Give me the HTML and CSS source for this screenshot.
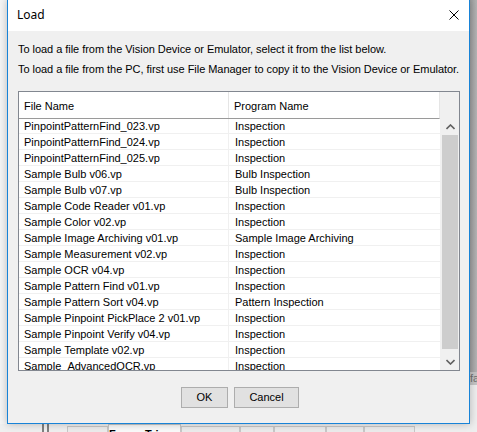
FILE: index.html
```html
<!DOCTYPE html>
<html>
<head>
<meta charset="utf-8">
<title>Load</title>
<link rel="stylesheet" href="styles.css">
</head>
<body>
<div class="app">
  <div class="app-main">
    <div class="app-canvas"></div>
    <div class="tabbar">
      <div class="rails"><span class="rail"></span><span class="rail"></span></div>
      <div class="tabs">
        <div class="tab t-current">Current</div>
        <div class="tab t-frame active">Frame Trigger</div>
        <div class="tab t-partial">Partial Scan</div>
        <div class="tab t-color">Color</div>
        <div class="tab t-line">Line Scan</div>
        <div class="tab t-analog">Analog</div>
        <div class="tab t-illum">Illuminator</div>
      </div>
    </div>
  </div>
  <div class="app-side">
    <div class="side-top"></div>
    <div class="side-field">fa</div>
    <div class="side-rest"></div>
  </div>
</div>

<div class="dialog">
  <div class="titlebar">
    <span class="title">Load</span>
    <svg class="close" width="10" height="10" viewBox="0 0 10 10"><path d="M0.5 0.5 L9.5 9.5 M9.5 0.5 L0.5 9.5" stroke="#000" stroke-width="1" fill="none"/></svg>
  </div>
  <div class="dlg-body">
    <p class="msg">To load a file from the Vision Device or Emulator, select it from the list below.</p>
    <p class="msg second">To load a file from the PC, first use File Manager to copy it to the Vision Device or Emulator.</p>
    <div class="listbox">
      <div class="table">
        <div class="header">
          <div class="hcell c1">File Name</div>
          <div class="hcell c2">Program Name</div>
        </div>
        <div class="rows">
          <div class="row"><div class="cell c1">PinpointPatternFind_023.vp</div><div class="cell c2">Inspection</div></div>
          <div class="row"><div class="cell c1">PinpointPatternFind_024.vp</div><div class="cell c2">Inspection</div></div>
          <div class="row"><div class="cell c1">PinpointPatternFind_025.vp</div><div class="cell c2">Inspection</div></div>
          <div class="row"><div class="cell c1">Sample Bulb v06.vp</div><div class="cell c2">Bulb Inspection</div></div>
          <div class="row"><div class="cell c1">Sample Bulb v07.vp</div><div class="cell c2">Bulb Inspection</div></div>
          <div class="row"><div class="cell c1">Sample Code Reader v01.vp</div><div class="cell c2">Inspection</div></div>
          <div class="row"><div class="cell c1">Sample Color v02.vp</div><div class="cell c2">Inspection</div></div>
          <div class="row"><div class="cell c1">Sample Image Archiving v01.vp</div><div class="cell c2">Sample Image Archiving</div></div>
          <div class="row"><div class="cell c1">Sample Measurement v02.vp</div><div class="cell c2">Inspection</div></div>
          <div class="row"><div class="cell c1">Sample OCR v04.vp</div><div class="cell c2">Inspection</div></div>
          <div class="row"><div class="cell c1">Sample Pattern Find v01.vp</div><div class="cell c2">Inspection</div></div>
          <div class="row"><div class="cell c1">Sample Pattern Sort v04.vp</div><div class="cell c2">Pattern Inspection</div></div>
          <div class="row"><div class="cell c1">Sample Pinpoint PickPlace 2 v01.vp</div><div class="cell c2">Inspection</div></div>
          <div class="row"><div class="cell c1">Sample Pinpoint Verify v04.vp</div><div class="cell c2">Inspection</div></div>
          <div class="row"><div class="cell c1">Sample Template v02.vp</div><div class="cell c2">Inspection</div></div>
          <div class="row"><div class="cell c1">Sample_AdvancedOCR.vp</div><div class="cell c2">Inspection</div></div>
        </div>
      </div>
      <div class="sidebar">
        <div class="corner"></div>
        <div class="scrollbar">
          <div class="arrow"><svg width="9" height="6" viewBox="0 0 9 6"><path d="M0.5 5 L4.5 1 L8.5 5" stroke="#606060" stroke-width="1.6" fill="none"/></svg></div>
          <div class="track"><div class="thumb"></div></div>
          <div class="arrow"><svg width="9" height="6" viewBox="0 0 9 6"><path d="M0.5 1 L4.5 5 L8.5 1" stroke="#606060" stroke-width="1.6" fill="none"/></svg></div>
        </div>
      </div>
    </div>
    <div class="buttons">
      <button class="btn ok">OK</button>
      <button class="btn cancel">Cancel</button>
    </div>
  </div>
</div>
</body>
</html>
```

FILE: styles.css
```css
* { box-sizing: border-box; }

html, body {
  margin: 0;
  padding: 0;
}

body {
  width: 477px;
  height: 432px;
  overflow: hidden;
  position: relative;
  background: #f0f0f0;
  font-family: "Liberation Sans", Arial, sans-serif;
  font-size: 11px;
  color: #000;
}

/* background application */
.app {
  display: grid;
  grid-template-columns: 1fr 7px;
  height: 432px;
}

.app-main {
  display: flex;
  flex-direction: column;
}

.app-canvas {
  flex: 1;
  background: #f5f5f5;
}

.tabbar {
  height: 8px;
  flex-shrink: 0;
  display: flex;
  background: #f0f0f0;
  overflow: visible;
}

.rails {
  display: flex;
  gap: 3px;
  margin-left: 42px;
  width: 25px;
}

.rail {
  width: 2px;
  height: 20px;
  background: #808080;
}

.tabs {
  display: flex;
  align-items: flex-start;
}

.tab {
  margin-top: 2px;
  height: 20px;
  padding-top: 3px;
  border: 1px solid #c8c8c8;
  border-bottom: none;
  background: #ececec;
  text-align: center;
  font-size: 11px;
  line-height: 13px;
  white-space: nowrap;
  overflow: hidden;
}

.tab.active {
  margin-top: 0;
  background: #fafafa;
  font-weight: bold;
}

.t-current { width: 41px; }
.t-frame { width: 73px; }
.t-partial { width: 59px; }
.t-color { width: 34px; }
.t-line { width: 52px; }
.t-analog { width: 38px; }
.t-illum { width: 51px; }

.app-side {
  display: flex;
  flex-direction: column;
}

.side-top {
  height: 372px;
  background: linear-gradient(to right, #9e9e9e, #b4b4b4);
}

.side-field {
  height: 13px;
  background: #c4c4c4;
  color: #707070;
  font-size: 11px;
  line-height: 13px;
  overflow: hidden;
}

.side-rest {
  flex: 1;
  background: #eeeeee;
}

/* dialog window (floating over the app) */
.dialog {
  position: absolute;
  left: 7px;
  top: -1px;
  width: 463px;
  height: 425px;
  border: 1px solid #1883d7;
  background: #f0f0f0;
  display: flex;
  flex-direction: column;
  box-shadow: 0 0 8px rgba(0, 0, 0, 0.25);
}

.titlebar {
  height: 31px;
  flex-shrink: 0;
  background: #fff;
  display: flex;
  align-items: center;
  justify-content: space-between;
  padding: 0 10px 0 9px;
}

.title {
  font-family: "Noto Sans", "Open Sans", sans-serif;
  font-size: 12px;
  line-height: 16px;
  margin-top: -1px;
}

.close {
  display: block;
  margin-top: -2px;
}

.dlg-body {
  flex: 1;
  padding: 12px 9px 0 10px;
  display: flex;
  flex-direction: column;
}

.msg {
  margin: 0;
  line-height: 13px;
  white-space: nowrap;
  letter-spacing: -0.04px;
}

.msg.second {
  margin-top: 7px;
}

/* list view */
.listbox {
  margin-top: 15px;
  height: 280px;
  flex-shrink: 0;
  border: 1px solid #828790;
  background: #fff;
  display: flex;
  overflow: hidden;
}

.table {
  width: 421px;
  display: flex;
  flex-direction: column;
  overflow: hidden;
}

.header {
  display: flex;
  height: 27px;
  flex-shrink: 0;
  background: #fff;
  border-bottom: 1px solid #9a9a9a;
  position: relative;
  z-index: 1;
  border-right: 1px solid #e5e5e5;
}

.hcell {
  padding: 8px 0 0 5px;
  line-height: 13px;
  white-space: nowrap;
}

.hcell.c1 {
  width: 210px;
  border-right: 1px solid #e5e5e5;
}

.rows {
  margin-top: -1px;
  flex-shrink: 0;
}

.row {
  display: flex;
  height: 16px;
  border-bottom: 1px solid #f0f0f0;
}

.cell {
  padding: 2px 0 0 5px;
  line-height: 13px;
  white-space: nowrap;
  overflow: hidden;
}

.cell.c1 {
  width: 210px;
  border-right: 1px solid #f0f0f0;
}

.cell.c2 {
  padding-left: 6px;
  flex: 1;
}

.sidebar {
  flex: 1;
  display: flex;
  flex-direction: column;
  background: #f0f0f0;
}

.corner {
  height: 26px;
  flex-shrink: 0;
}

.scrollbar {
  flex: 1;
  display: flex;
  flex-direction: column;
}

.arrow {
  height: 17px;
  flex-shrink: 0;
  display: flex;
  align-items: center;
  justify-content: center;
  padding-left: 1px;
}

.arrow svg { display: block; }

.track {
  flex: 1;
  padding: 0 1px 0 2px;
}

.thumb {
  height: 214px;
  background: #cdcdcd;
}

/* buttons */
.buttons {
  display: flex;
  justify-content: center;
  gap: 6px;
  margin-top: 16px;
  padding-left: 2px;
}

.btn {
  height: 21px;
  border: 1px solid #adadad;
  background: #e1e1e1;
  font-family: "Liberation Sans", Arial, sans-serif;
  font-size: 11px;
  color: #000;
  padding: 0;
  line-height: 13px;
}

.btn.ok { width: 47px; }
.btn.cancel { width: 65px; }
```
